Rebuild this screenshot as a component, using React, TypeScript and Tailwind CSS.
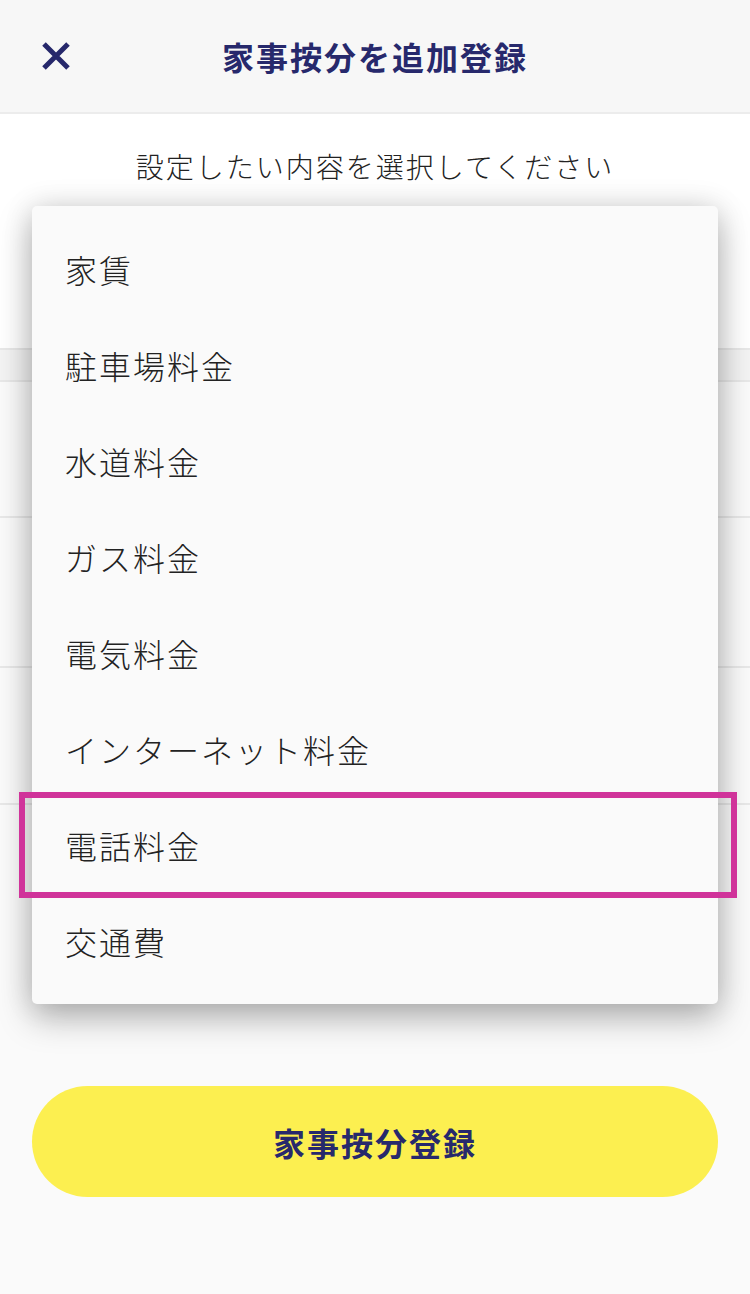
const jp = { fontFamily: '"Noto Sans CJK JP", "Noto Sans", sans-serif' };

const items = [
  "家賃",
  "駐車場料金",
  "水道料金",
  "ガス料金",
  "電気料金",
  "インターネット料金",
  "電話料金",
  "交通費",
];

function CloseIcon() {
  return (
    <svg width="30" height="30" viewBox="0 0 30 30" fill="none">
      <path
        d="M3 3 L27 27 M27 3 L3 27"
        stroke="#26286b"
        strokeWidth="5"
        strokeLinecap="butt"
      />
    </svg>
  );
}

export default function App() {
  return (
    <div
      className="relative w-[750px] h-[1294px] overflow-hidden bg-[#fafafa]"
      style={jp}
    >
      {/* header */}
      <div className="relative flex h-[114px] items-center justify-center border-b-2 border-[#ececec] bg-[#f7f7f7]">
        <button className="absolute left-[41px] top-[41px]">
          <CloseIcon />
        </button>
        <h1 className="text-[32px] font-bold tracking-[2px] text-[#27296c]">
          家事按分を追加登録
        </h1>
      </div>

      {/* body behind the dropdown */}
      <div className="flex h-[234px] justify-center bg-white pt-[31px]">
        <p className="text-[28px] font-light tracking-[2px] text-[#222]">
          設定したい内容を選択してください
        </p>
      </div>
      <div className="h-[34px] border-y-2 border-[#e8e8e8] bg-[#f3f3f3]" />
      <div className="h-[136px] border-b-2 border-[#e8e8e8] bg-[#fafafa]" />
      <div className="h-[150px] border-b-2 border-[#e8e8e8] bg-[#fafafa]" />
      <div className="h-[137px] border-b-2 border-[#e8e8e8] bg-[#fafafa]" />

      <div className="px-[32px] pt-[281px]">
        <button className="flex h-[111px] w-full items-center justify-center rounded-full bg-[#fcef50] text-[32px] font-bold tracking-[2px] text-[#27296c]">
          家事按分登録
        </button>
      </div>

      {/* dropdown menu */}
      <div className="absolute left-[32px] top-[206px] w-[686px] rounded-[5px] bg-[#fafafa] py-[15px] shadow-[0_14px_34px_rgba(0,0,0,0.28),0_0_30px_rgba(0,0,0,0.12)]">
        {items.map((label) => (
          <div
            key={label}
            className="flex h-[96px] items-center pl-[33px] text-[32px] font-light tracking-[2px] text-[#222]"
          >
            {label}
          </div>
        ))}
      </div>

      {/* highlight annotation */}
      <div className="absolute left-[19px] top-[792px] h-[106px] w-[718px] border-[6px] border-[#d0339a]" />
    </div>
  );
}
